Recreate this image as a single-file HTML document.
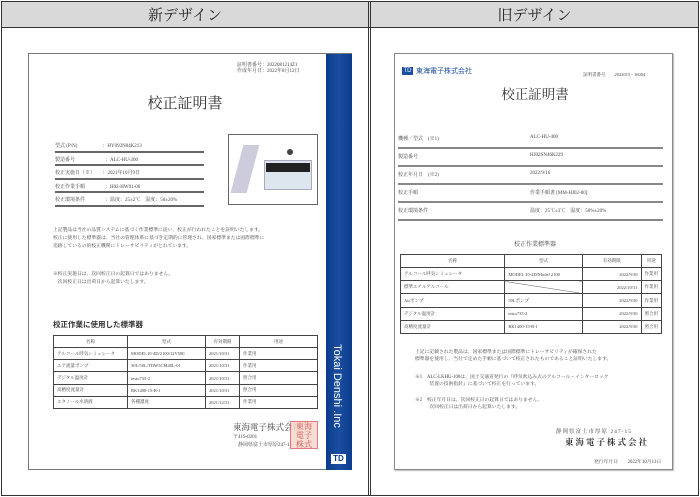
<!DOCTYPE html>
<html><head><meta charset="utf-8"><style>
*{margin:0;padding:0;box-sizing:border-box}
body{width:700px;height:497px;background:#fff;font-family:"Liberation Serif","Noto Serif CJK SC",serif;position:relative;overflow:hidden;color:#333}
.a{position:absolute}
.s{font-family:"Liberation Sans","Noto Sans CJK JP",sans-serif}
.t{font-size:5px;white-space:nowrap;color:#444}
table{border-collapse:collapse;position:absolute}
td{border:1px solid #444;font-size:4.5px;padding:0 3px;white-space:nowrap;color:#444}
</style></head><body>
<div class="a" style="left:1px;top:1px;width:698px;height:495px;border:1px solid #333"></div>
<div class="a" style="left:2px;top:2px;width:696px;height:26px;background:#d9d9d9;border-bottom:1px solid #333"></div>
<div class="a" style="left:368px;top:1px;width:3px;height:495px;border-left:1px solid #333;border-right:1px solid #333"></div>
<div class="a" style="left:2px;top:4px;width:366px;text-align:center;font-size:15px;color:#222">新デザイン</div>
<div class="a" style="left:371px;top:4px;width:327px;text-align:center;font-size:15px;color:#222">旧デザイン</div>

<!-- left doc -->
<div class="a" style="left:28px;top:53px;width:324px;height:417px;border:1px solid #777;border-right:none"></div>
<div class="a" style="left:326px;top:54px;width:26px;height:416px;background:linear-gradient(90deg,#0d3b8c,#1a4ea0,#0d3b8c)"></div>
<div class="a s" style="left:331px;top:380px;color:#fff;font-size:11px;transform:rotate(90deg);transform-origin:center;width:110px;margin-left:-49px;text-align:center;white-space:nowrap">Tokai Denshi .Inc</div>
<div class="a s" style="left:331px;top:454px;width:15px;height:10px;background:#fff;color:#0d3b8c;font-size:8px;line-height:10px;text-align:center;font-weight:bold">TD</div>
<div class="a t" style="left:237px;top:63px;line-height:6px">証明書番号：2022081214Z1<br>作成年月日：2022年8月12日</div>
<div class="a" style="left:140px;top:92px;width:90px;text-align:center;font-size:15px;color:#333">校正証明書</div>
<div class="a" style="left:55px;top:139px;width:149px">
<div class="t" style="height:13.5px;border-bottom:2px double #666;padding-top:3px">型式 (P/N)　　　　　：HY092N04K213</div>
<div class="t" style="height:13.5px;border-bottom:2px double #666;padding-top:3px">製造番号　　　　　　：ALC-HU-200</div>
<div class="t" style="height:13.5px;border-bottom:2px double #666;padding-top:3px">校正実施日（※）　　：2021年10月9日</div>
<div class="t" style="height:13.5px;border-bottom:2px double #666;padding-top:3px">校正作業手順　　　　：H02-HW01-00</div>
<div class="t" style="height:13.5px;border-bottom:2px double #666;padding-top:3px">校正環境条件　　　　：温度：25±2℃　湿度：50±20%</div>
</div>
<div class="a" style="left:228px;top:134px;width:90px;height:71px;border:1px solid #666">
<div class="a" style="left:35px;top:25px;width:48px;height:30px;background:#dde6ee;border:1px solid #aab"></div>
<div class="a" style="left:37px;top:28px;width:44px;height:9px;background:#222"></div>
<div class="a" style="left:8px;top:10px;width:16px;height:48px;background:#ccd;transform:skewX(-15deg)"></div>
<div class="a" style="left:58px;top:14px;width:6px;height:6px;background:#444;border-radius:3px"></div>
</div>
<div class="a t" style="left:53px;top:227px;line-height:8px;font-size:4.8px">上記製品は当社の品質システムに基づく作業標準に従い、校正が行われたことを証明いたします。<br>校正に使用した標準器は、当社の管理体系に基づき定期的に管理され、国家標準または国際標準に<br>追跡しているの的校正機関にトレーサビリティがとれています。</div>
<div class="a t" style="left:53px;top:271px;line-height:8px;font-size:4.8px">※校正実施日は、次回校正日の起算日ではありません。<br>　次回校正日は出荷日から起算いたします。</div>
<div class="a s" style="left:53px;top:319px;font-size:7.5px;font-weight:bold;color:#333">校正作業に使用した標準器</div>
<table style="left:53px;top:335px;width:265px;height:74px">
<tr><td style="width:74px;text-align:center">名称</td><td style="width:78px;text-align:center">型式</td><td style="width:34px;text-align:center">有効期限</td><td style="text-align:center">用途</td></tr>
<tr><td>アルコール呼気シミュレータ</td><td>MODEL10-4D/2100/12V500</td><td>2021/10/31</td><td>作業用</td></tr>
<tr><td>エア流量ポンプ</td><td>30L/50L/TDW5CM40L-01</td><td>2021/10/31</td><td>作業用</td></tr>
<tr><td>デジタル温度計</td><td>testo735-2</td><td>2021/10/31</td><td>照合用</td></tr>
<tr><td>高精度流量計</td><td>RK1400-15-B-1</td><td>2021/10/31</td><td>照合用</td></tr>
<tr><td>エタノール水溶液</td><td>各種濃度</td><td>2021/12/31</td><td>作業用</td></tr>
</table>
<div class="a" style="left:233px;top:421px;font-size:8.5px;color:#444;white-space:nowrap">東海電子株式会社</div>
<div class="a t" style="left:233px;top:434px;line-height:8px">〒419-0201<br>　静岡県富士市厚原247-15</div>
<div class="a" style="left:290px;top:421px;width:28px;height:28px;border:1px solid #d66;background:#f6d8cc;opacity:.85;color:#c33;font-size:8px;line-height:9px;text-align:center">東海<br>電子<br>株式</div>

<!-- right doc -->
<div class="a" style="left:394px;top:53px;width:279px;height:417px;border:1px solid #888;box-shadow:1px 1px 1px #bbb"></div>
<div class="a s" style="left:402px;top:67px;width:11px;height:8px;background:#1a4ea0;color:#fff;font-size:6px;line-height:8px;text-align:center">TD</div>
<div class="a s" style="left:416px;top:66px;font-size:7px;color:#1a4ea0;white-space:nowrap">東海電子株式会社</div>
<div class="a t" style="left:583px;top:72px;font-size:4.5px">証明書番号　　2022015 - 16004</div>
<div class="a" style="left:490px;top:83px;width:90px;text-align:center;font-size:13.5px;color:#333">校正証明書</div>
<div class="a" style="left:398px;top:131px;width:265px">
<div class="t" style="height:18px;border-bottom:2px double #888;padding-top:4px;position:relative">機種／型式　(※1)<span class="a" style="left:132px">ALC-HU-400</span></div>
<div class="t" style="height:18px;border-bottom:2px double #888;padding-top:4px;position:relative">製造番号<span class="a" style="left:132px">HJ02SN46K229</span></div>
<div class="t" style="height:18px;border-bottom:2px double #888;padding-top:4px;position:relative">校正年月日　(※2)<span class="a" style="left:132px">2022/9/16</span></div>
<div class="t" style="height:18px;border-bottom:2px double #888;padding-top:4px;position:relative">校正手順<span class="a" style="left:132px">作業手順書 [MM-HJ02-00]</span></div>
<div class="t" style="height:18px;border-bottom:2px double #888;padding-top:4px;position:relative">校正環境条件<span class="a" style="left:132px">温度：25℃±3℃　湿度：50%±20%</span></div>
</div>
<div class="a" style="left:490px;top:239px;width:90px;text-align:center;font-size:6px;color:#444">校正作業標準器</div>
<table style="left:400px;top:254px;width:262px;height:80px">
<tr><td style="width:105px;text-align:center">名称</td><td style="width:78px;text-align:center">型式</td><td style="width:59px;text-align:center">有効期限</td><td style="text-align:center">用途</td></tr>
<tr><td>アルコール呼気シミュレータ</td><td>MODEL 10-4D/Model 2100</td><td style="text-align:right">2022/9/30</td><td>作業用</td></tr>
<tr><td>標準エチルアルコール</td><td style="background:linear-gradient(to top right,transparent 48%,#555 50%,transparent 52%)"></td><td style="text-align:right">2022/10/31</td><td>作業用</td></tr>
<tr><td>Airポンプ</td><td>50Lポンプ</td><td style="text-align:right">2022/9/30</td><td>作業用</td></tr>
<tr><td>デジタル温度計</td><td>testo735-2</td><td style="text-align:right">2022/9/30</td><td>照合用</td></tr>
<tr><td>高精度流量計</td><td>RK1400-15-B-1</td><td style="text-align:right">2022/9/30</td><td>照合用</td></tr>
</table>
<div class="a t" style="left:415px;top:349px;line-height:7px;font-size:4.8px">上記に記載された製品は、国家標準または国際標準にトレーサビリティが確保された<br>標準器を使用し、当社で定めた手順に基づいて校正されたものであること証明いたします。</div>
<div class="a t" style="left:415px;top:374px;line-height:7px;font-size:4.8px">※1　ALC-LKHU-100は、国土交通省発行の『呼気吹込み式のアルコール・インターロック<br>　　　装置の技術指針』に基づいて校正を行っています。</div>
<div class="a t" style="left:415px;top:397px;line-height:7px;font-size:4.8px">※2　校正年月日は、次回校正日の起算日ではありません。<br>　　　次回校正日は出荷日から起算いたします。</div>
<div class="a t" style="left:556px;top:427px;font-size:5.5px;letter-spacing:1px">静岡県富士市厚原 247-15</div>
<div class="a" style="left:565px;top:436px;font-size:8.5px;font-weight:bold;letter-spacing:2px;color:#333;white-space:nowrap">東海電子株式会社</div>
<div class="a t" style="left:594px;top:458px;font-size:4.8px">発行年月日　　2022年10月13日</div>
</body></html>
